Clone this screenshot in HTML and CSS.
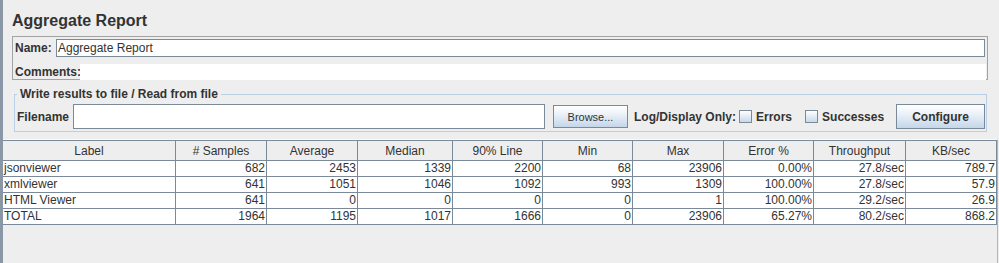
FILE: index.html
```html
<!DOCTYPE html>
<html>
<head>
<meta charset="utf-8">
<link rel="stylesheet" href="styles.css">
</head>
<body>
<div class="app">
  <div class="title">Aggregate Report</div>
  <div class="namepanel">
    <div class="nrow"><span class="lbl name-lbl">Name:</span><div class="field">Aggregate Report</div></div>
    <div class="crow"><span class="lbl com-lbl">Comments:</span><div class="cfield"></div></div>
  </div>
  <fieldset class="fs">
    <legend class="lg">Write results to file / Read from file</legend>
    <div class="fsrow">
      <span class="lbl fn-lbl">Filename</span>
      <div class="fn-input"></div>
      <div class="btn btn-browse">Browse...</div>
      <span class="lbl log-lbl">Log/Display Only:</span>
      <span class="cb cb1"></span>
      <span class="lbl cb-lbl">Errors</span>
      <span class="cb cb2"></span>
      <span class="lbl cb-lbl">Successes</span>
      <div class="btn btn-conf">Configure</div>
    </div>
  </fieldset>
  <div class="pane">
    <div class="grid thead">
      <div class="c">Label</div><div class="c"># Samples</div><div class="c">Average</div><div class="c">Median</div><div class="c">90% Line</div><div class="c">Min</div><div class="c">Max</div><div class="c">Error %</div><div class="c">Throughput</div><div class="c">KB/sec</div>
    </div>
    <div class="grid tr">
      <div class="c l">jsonviewer</div><div class="c">682</div><div class="c">2453</div><div class="c">1339</div><div class="c">2200</div><div class="c">68</div><div class="c">23906</div><div class="c">0.00%</div><div class="c">27.8/sec</div><div class="c">789.7</div>
    </div>
    <div class="grid tr">
      <div class="c l">xmlviewer</div><div class="c">641</div><div class="c">1051</div><div class="c">1046</div><div class="c">1092</div><div class="c">993</div><div class="c">1309</div><div class="c">100.00%</div><div class="c">27.8/sec</div><div class="c">57.9</div>
    </div>
    <div class="grid tr">
      <div class="c l">HTML Viewer</div><div class="c">641</div><div class="c">0</div><div class="c">0</div><div class="c">0</div><div class="c">0</div><div class="c">1</div><div class="c">100.00%</div><div class="c">29.2/sec</div><div class="c">26.9</div>
    </div>
    <div class="grid tr">
      <div class="c l">TOTAL</div><div class="c">1964</div><div class="c">1195</div><div class="c">1017</div><div class="c">1666</div><div class="c">0</div><div class="c">23906</div><div class="c">65.27%</div><div class="c">80.2/sec</div><div class="c">868.2</div>
    </div>
  </div>
</div>
</body>
</html>
```

FILE: styles.css
```css
html, body {
  margin: 0;
  padding: 0;
  background: #eeeeee;
}
body {
  font-family: "Liberation Sans", Arial, sans-serif;
  font-size: 12px;
  color: #333333;
}
.app {
  height: 263px;
  box-sizing: border-box;
  border-left: 3px solid #8a97a6;
  overflow: hidden;
}
.title {
  height: 36px;
  box-sizing: border-box;
  padding: 12px 0 0 9px;
  font-size: 16px;
  font-weight: bold;
  line-height: 18px;
}
.lbl {
  font-weight: bold;
  white-space: nowrap;
}
.namepanel {
  margin-left: 9px;
  width: 976px;
  height: 44px;
  box-sizing: border-box;
  border: 1px solid #a3a3a3;
  padding: 1px 1px 0 1px;
}
.nrow {
  display: flex;
  height: 18px;
  margin-top: 1px;
}
.name-lbl {
  width: 42px;
  box-sizing: border-box;
  padding-left: 1px;
  line-height: 18px;
}
.field {
  flex: 1;
  margin-right: 1px;
  box-sizing: border-box;
  border: 1px solid #7a8a99;
  background: #ffffff;
  padding-left: 1px;
  line-height: 16px;
}
.crow {
  display: flex;
  height: 16px;
  margin-top: 7px;
}
.com-lbl {
  width: 66px;
  box-sizing: border-box;
  padding-left: 1px;
  line-height: 16px;
}
.cfield {
  flex: 1;
  background: #ffffff;
}
.fs {
  margin: 7px 0 0 11px;
  width: 973px;
  box-sizing: border-box;
  border: 1px solid #b8cfe5;
  padding: 0 1px 2px 2px;
  min-width: 0;
}
.lg {
  font-weight: bold;
  font-size: 12px;
  line-height: 14px;
  padding: 0 3px;
}
.fsrow {
  display: flex;
  align-items: center;
  height: 25px;
  margin-top: 3px;
}
.fn-lbl {
  width: 56px;
}
.fn-input {
  width: 472px;
  height: 25px;
  box-sizing: border-box;
  border: 1px solid #7a8a99;
  background: #ffffff;
}
.btn {
  box-sizing: border-box;
  border: 1px solid #7a8a99;
  background: linear-gradient(#ffffff 0%, #eef3f9 35%, #dde8f3 60%, #c4d6e9 100%);
  display: flex;
  align-items: center;
  justify-content: center;
}
.btn-browse {
  margin-left: 8px;
  width: 75px;
  height: 23px;
  font-size: 11px;
}
.log-lbl {
  margin-left: 6px;
}
.cb {
  width: 13px;
  height: 13px;
  box-sizing: border-box;
  border: 1px solid #7a8a99;
  background: linear-gradient(#ffffff, #dde8f3 60%, #c8d9ea);
}
.cb1 {
  margin-left: 3px;
}
.cb2 {
  margin-left: 13px;
}
.cb-lbl {
  margin-left: 4px;
}
.btn-conf {
  margin-left: auto;
  width: 89px;
  height: 25px;
  font-weight: bold;
}
.pane {
  margin-top: 7px;
  width: 995px;
  height: 130px;
  box-sizing: border-box;
  border-top: 1px solid #fafafa;
  border-right: 1px solid #b5b5b5;
}
.grid {
  display: grid;
  grid-template-columns: 173px 91px 91px 95px 90px 90px 91px 90px 92px 91px;
}
.c {
  box-sizing: border-box;
  border-right: 1px solid #7a8a99;
  white-space: nowrap;
  overflow: hidden;
}
.thead .c {
  border-top: 1px solid #7a8a99;
  border-bottom: 1px solid #7a8a99;
  height: 21px;
  padding-top: 1px;
  line-height: 18px;
  text-align: center;
  background: #eeeeee;
}
.tr .c {
  height: 16px;
  border-bottom: 1px solid #7a8a99;
  line-height: 15px;
  background: #ffffff;
  text-align: right;
  padding-right: 1px;
}
.tr .c.l {
  text-align: left;
  padding-left: 1px;
}
```
